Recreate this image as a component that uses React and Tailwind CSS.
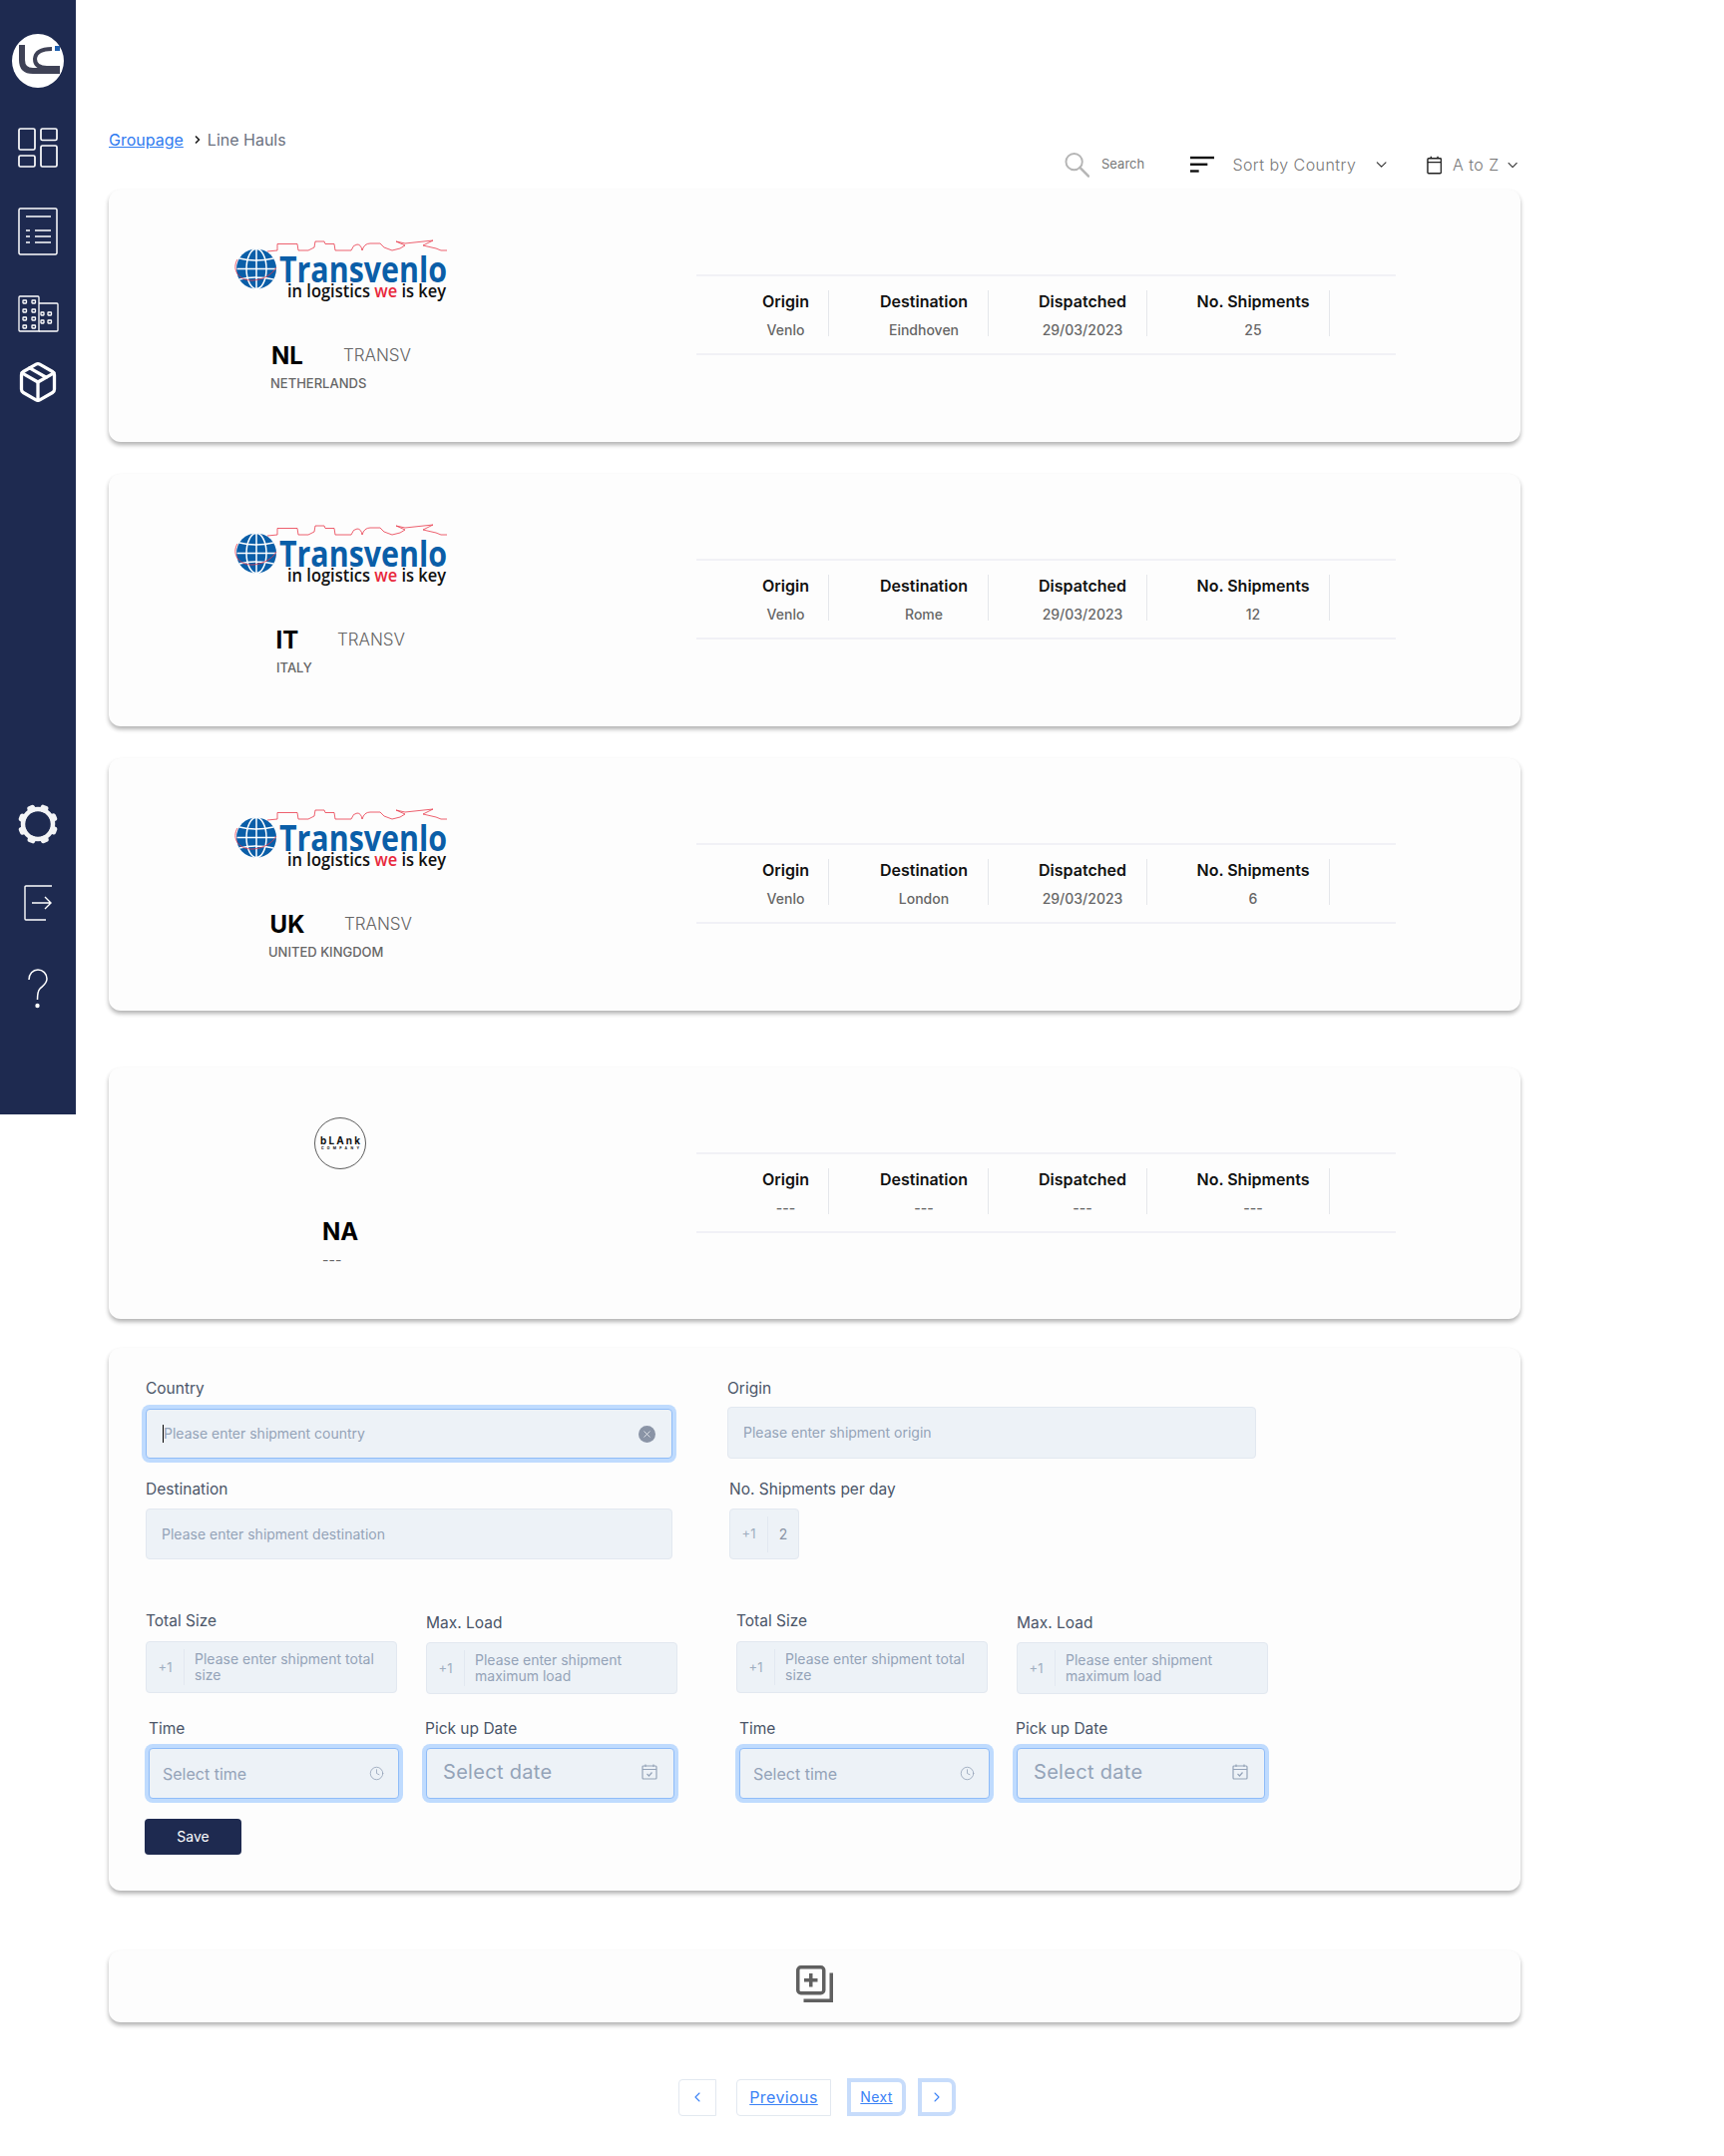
import { ChevronDown, ChevronLeft, ChevronRight, Clock, Package, X } from 'lucide-react'

const FONT = "font-['Inter','Liberation_Sans',sans-serif]"

const LINE_HAULS = [
  { code: 'NL', name: 'NETHERLANDS', nameClass: 'ml-[162px]', vendorClass: 'ml-0', destination: 'Eindhoven', shipments: '25' },
  { code: 'IT', name: 'ITALY', nameClass: 'ml-[168px]', vendorClass: '-ml-[6px]', destination: 'Rome', shipments: '12' },
  { code: 'UK', name: 'UNITED KINGDOM', nameClass: 'ml-[160px]', vendorClass: 'ml-px', destination: 'London', shipments: '6' },
]

const LcLogo = () => (
  <svg width="52" height="54" viewBox="0 0 52 54" className="ml-3 mt-[34px]">
    <ellipse cx="26" cy="27" rx="26" ry="27" fill="#fff" />
    <path d="M10 11V26Q10 37 21 37H48" fill="none" stroke="#3f4256" strokeWidth="6" />
    <path d="M40 15Q24 15 23 25Q23 34 35 34H48" fill="none" stroke="#3f4256" strokeWidth="4" />
    <rect x="43" y="12" width="5" height="5" fill="#1e5fb0" />
  </svg>
)

const DashboardIcon = () => (
  <svg width="40" height="40" viewBox="0 0 40 40" fill="none" stroke="#fff" strokeWidth="1.7">
    <rect x="1" y="1" width="16" height="21" rx="1.5" />
    <rect x="23" y="1" width="16" height="11.5" rx="1.5" />
    <rect x="1" y="28" width="16" height="11" rx="1.5" />
    <rect x="23" y="18" width="16" height="21" rx="1.5" />
  </svg>
)

const ListIcon = () => (
  <svg width="40" height="48" viewBox="0 0 40 48" fill="none" stroke="#fff" strokeWidth="1.5">
    <rect x="1" y="1" width="38" height="46" rx="1.5" />
    <path d="M8 9H33M17 23H33M17 29H33M17 35H33M8 23H12M8 29H12M8 35H12" />
  </svg>
)

const BuildingIcon = () => (
  <svg width="41" height="37" viewBox="0 0 41 37" fill="none" stroke="#fff" strokeWidth="1.3">
    <path d="M21 36H2a1 1 0 0 1-1-1V2a1 1 0 0 1 1-1h18a1 1 0 0 1 1 1V36Z" />
    <path d="M21 8H39a1 1 0 0 1 1 1V35a1 1 0 0 1-1 1H21" />
    {[5, 14, 22, 30].map((y) => (
      <g key={y}>
        <rect x="5" y={y} width="3.5" height="3" rx="0.5" />
        <rect x="14" y={y} width="3.5" height="3" rx="0.5" />
      </g>
    ))}
    {[17, 25].map((y) => (
      <g key={y}>
        <rect x="23" y={y} width="3" height="3" rx="0.5" />
        <rect x="30" y={y} width="3.5" height="3" rx="0.5" />
      </g>
    ))}
  </svg>
)

const GearIcon = () => (
  <svg width="40" height="40" viewBox="0 0 40 40" fill="#f3f4f6">
    <circle cx="20" cy="20" r="15" fill="none" stroke="#f3f4f6" strokeWidth="4.5" />
    {[22, 67, 112, 157, 202, 247, 292, 337].map((deg) => (
      <rect key={deg} x="16" y="0" width="8" height="7" rx="2.5" transform={`rotate(${deg} 20 20)`} />
    ))}
  </svg>
)

const LogoutIcon = () => (
  <svg width="28" height="36" viewBox="0 0 28 36" fill="none" stroke="#fff" strokeWidth="1.4">
    <path d="M28 1H2a1 1 0 0 0-1 1V34a1 1 0 0 0 1 1H22" />
    <path d="M8 18H27M21 12l6 6-6 6" />
  </svg>
)

const QuestionIcon = () => (
  <svg width="20" height="40" viewBox="0 0 20 40" fill="none" stroke="#fff" strokeWidth="1.5">
    <path d="M1 11C1 5 5 1 10 1C15 1 19 5 19 10C19 15 15 17 12 20C10 22 9.500 26 9.500 31" />
    <circle cx="9.500" cy="37" r="2.200" fill="#fff" stroke="none" />
  </svg>
)

const Sidebar = () => (
  <aside className="w-[76px] h-[1117px] shrink-0 bg-[#1e2a50] flex flex-col">
    <LcLogo />
    <div className="ml-[18px] mt-10"><DashboardIcon /></div>
    <div className="ml-[18px] mt-10"><ListIcon /></div>
    <div className="ml-[18px] mt-10"><BuildingIcon /></div>
    <div className="ml-4 mt-[28px] h-11 text-white"><Package size={44} strokeWidth={1.8} /></div>
    <div className="ml-[18px] mt-[401px]"><GearIcon /></div>
    <div className="ml-6 mt-[41px]"><LogoutIcon /></div>
    <div className="ml-7 mt-[48px]"><QuestionIcon /></div>
  </aside>
)

const TransvenloLogo = () => (
  <svg width="216" height="64" viewBox="0 0 216 64" className="ml-[125px] mt-[50px] shrink-0 block overflow-visible">
    <path
      d="M34 12L44 11V4.500H64L65 11H75L81 8L82 2H91L92 4.500H101L102 11H118Q120 5 124 5Q128 5 129 11Q131 4 137 4H147L151 8L159 11L167 9L172 6L163 2L172 4L200 1L190 6L203 9L208 11H214"
      fill="none"
      stroke="#e8394a"
      strokeWidth="0.8"
    />
    <circle cx="23" cy="29.500" r="20" fill="#0a5ea8" />
    <g fill="none" stroke="#fff" strokeWidth="1.500">
      <ellipse cx="23" cy="29.500" rx="10" ry="20" />
      <path d="M23 9.500V49.500M3.500 29.500H42.500M6 19Q23 23 40 19M6 40Q23 36 40 40" />
    </g>
    <path d="M4 20C-2 30 5 42 20 41C30 40 38 36 43 28" fill="none" stroke="#e8394a" strokeWidth="0.8" />
    <text
      x="46"
      y="43"
      fontFamily="'Open Sans', sans-serif"
      fontWeight="700"
      fontSize="36"
      fill="#0a5ea8"
      textLength="168"
      lengthAdjust="spacingAndGlyphs"
    >
      Transvenlo
    </text>
    <text
      x="54"
      y="58"
      fontFamily="'Open Sans', sans-serif"
      fontWeight="600"
      fontSize="18"
      fill="#111"
      textLength="159"
      lengthAdjust="spacingAndGlyphs"
    >
      in logistics <tspan fill="#e8283c">we</tspan> is key
    </text>
  </svg>
)

const BlankLogo = () => (
  <svg width="52" height="52" viewBox="0 0 52 52" className="ml-[206px] mt-[50px] shrink-0 block">
    <circle cx="26" cy="26" r="25.500" fill="none" stroke="#333" strokeWidth="0.8" />
    <text x="6" y="27" fontFamily="'Inter', sans-serif" fontWeight="700" fontSize="10" fill="#111" textLength="40" lengthAdjust="spacing">
      bLAnk
    </text>
    <text x="7" y="32" fontFamily="'Inter', sans-serif" fontWeight="700" fontSize="3.500" fill="#111" textLength="38" lengthAdjust="spacing">
      COMPANY
    </text>
  </svg>
)

const StatCell = ({ title, value, className }) => (
  <div className={`flex flex-col items-center border-r border-[#e5e7eb] pr-5 h-[46px] ${className}`}>
    <div className="mt-px text-base leading-5 font-semibold text-[#111] whitespace-nowrap">{title}</div>
    <div className="mt-[10px] text-sm leading-[18px] font-medium text-[#666] whitespace-nowrap">{value}</div>
  </div>
)

const StatsTable = ({ destination, dispatched, shipments, origin }) => (
  <div className="w-[701px] h-[81px] mt-[85px] border-y-2 border-[#f1f1f6] flex pt-[14px] pl-5">
    <StatCell title="Origin" value={origin} className="w-[113px] pl-[47px]" />
    <StatCell title="Destination" value={destination} className="w-[160px] pl-[51px]" />
    <StatCell title="Dispatched" value={dispatched} className="w-[159px] pl-[50px]" />
    <StatCell title="No. Shipments" value={shipments} className="w-[183px] pl-[50px]" />
  </div>
)

const CARD = 'rounded-xl bg-[#fdfdfd] shadow-[0_3px_4px_rgba(0,0,0,0.3)]'

const HaulCard = ({ code, name, nameClass, vendorClass, destination, shipments }) => (
  <div className={`${CARD} h-[253px] flex`}>
    <div className="w-[589px] shrink-0 flex flex-col">
      <TransvenloLogo />
      <div className="mt-[37px] ml-[149px] flex h-8 items-center">
        <div className="w-[60px] text-center text-2xl font-bold text-black">{code}</div>
        <div className={`w-[120px] text-center text-[17px] font-light text-[#666] ${vendorClass}`}>TRANSV</div>
      </div>
      <div className={`mt-px text-[13px] leading-5 font-medium text-[#666] ${nameClass}`}>{name}</div>
    </div>
    <StatsTable origin="Venlo" destination={destination} dispatched="29/03/2023" shipments={shipments} />
  </div>
)

const BlankCard = () => (
  <div className={`${CARD} h-[252px] mt-[57px] flex`}>
    <div className="w-[589px] shrink-0 flex flex-col">
      <BlankLogo />
      <div className="mt-[47px] ml-[214px] h-8 leading-8 text-2xl font-bold text-black">NA</div>
      <div className="mt-[2px] ml-[214px] text-sm leading-5 text-[#666]">---</div>
    </div>
    <StatsTable origin="---" destination="---" dispatched="---" shipments="---" />
  </div>
)

const Label = ({ children, className = '' }) => (
  <div className={`text-[15.500px] leading-5 text-[#4a5568] whitespace-nowrap ${className}`}>{children}</div>
)

const FIELD = 'bg-[#edf2f7] border border-[#e2e8f0] rounded text-sm text-[#94a3b8] flex items-center'
const FOCUSED = 'bg-[#edf2f7] border border-[#8fbcf8] rounded shadow-[0_0_0_4px_#bfdbfe] text-[#94a3b8] flex items-center'

const PrefixedField = ({ text, className = '' }) => (
  <div className={`${FIELD} h-[52px] ${className}`}>
    <div className="w-[38px] h-9 shrink-0 border-r border-[#e2e8f0] flex items-center justify-center text-[#a0aec0] text-[13px]">+1</div>
    <div className="pl-[10px] pr-3 leading-4 text-sm">{text}</div>
  </div>
)

const CalendarCheck = () => (
  <svg width="16" height="16" viewBox="0 0 16 16" fill="none" stroke="#94a3b8" strokeWidth="1.200">
    <rect x="1" y="2" width="14" height="13" rx="1" />
    <path d="M1 5.500H15M4 0.500V3M12 0.500V3M5.500 10l2 2 3-3.500" />
  </svg>
)

const ScheduleGroup = () => (
  <div className="w-[533px] grid grid-cols-[252px_252px] gap-x-[29px]">
    <Label>Total Size</Label>
    <Label className="mt-[2px]">Max. Load</Label>
    <PrefixedField text="Please enter shipment total size" className="mt-2" />
    <PrefixedField text="Please enter shipment maximum load" className="mt-[9px]" />
    <Label className="mt-[25px] ml-[3px]">Time</Label>
    <Label className="mt-[25px] -ml-px">Pick up Date</Label>
    <div className={`${FOCUSED} mt-[9px] ml-[3px] w-[251px] h-[51px] pl-[13px] pr-[14px] justify-between text-base`}>
      <span>Select time</span>
      <Clock size={15} strokeWidth={1.3} />
    </div>
    <div className={`${FOCUSED} mt-[9px] w-[249px] h-[51px] pl-4 pr-4 pb-1 justify-between text-xl tracking-[0.3px]`}>
      <span>Select date</span>
      <CalendarCheck />
    </div>
  </div>
)

const ShipmentForm = () => (
  <div className={`${CARD} h-[544px] mt-[29px] pl-[37px] pt-[31px]`}>
    <div className="flex">
      <div className="w-[528px]">
        <Label>Country</Label>
        <div className={`${FOCUSED} mt-[10px] h-[50px] pl-4 pr-4 justify-between text-sm`}>
          <span className="border-l border-black leading-[18px]">Please enter shipment country</span>
          <span className="w-[17px] h-[17px] rounded-full bg-[#8a94a6] text-white flex items-center justify-center">
            <X size={11} strokeWidth={1.5} />
          </span>
        </div>
        <Label className="mt-[21px]">Destination</Label>
        <div className={`${FIELD} mt-[9px] h-[51px] pl-[15px]`}>Please enter shipment destination</div>
      </div>
      <div className="w-[530px] ml-[55px]">
        <Label>Origin</Label>
        <div className={`${FIELD} mt-2 h-[52px] pl-[15px]`}>Please enter shipment origin</div>
        <Label className="mt-[21px] ml-[2px]">No. Shipments per day</Label>
        <div className={`${FIELD} mt-[9px] ml-[2px] w-[70px] h-[51px]`}>
          <div className="w-[38px] h-9 border-r border-[#e2e8f0] flex items-center justify-center text-[13px] text-[#a0aec0]">+1</div>
          <div className="flex-1 text-center text-[#8a94a6]">2</div>
        </div>
      </div>
    </div>
    <div className="flex gap-x-[59px] mt-[52px]">
      <ScheduleGroup />
      <ScheduleGroup />
    </div>
    <button className="mt-5 -ml-px w-[97px] h-9 rounded bg-[#1e2a50] text-white text-sm">Save</button>
  </div>
)

const AddCard = () => (
  <div className={`${CARD} h-[72px] mt-[60px] flex justify-center pt-[15px]`}>
    <svg width="37" height="37" viewBox="0 0 37 37" fill="none" stroke="#606060" strokeWidth="3.5">
      <rect x="1.750" y="1.750" width="26" height="26" rx="3" />
      <path d="M14.750 8V21.500M8 14.750H21.500M7.500 35.250H35.250V7.500" />
    </svg>
  </div>
)

const Pagination = () => (
  <div className="mt-[56px] ml-[571px] flex items-center text-[#3b82f6]">
    <a className="w-[38px] h-[37px] border border-[#e2e8f0] rounded-l flex items-center justify-center">
      <ChevronLeft size={16} strokeWidth={1.6} />
    </a>
    <a className="ml-5 w-[95px] h-[37px] border border-[#e2e8f0] rounded-l flex items-center justify-center text-base tracking-wide underline">
      Previous
    </a>
    <a className="ml-4 w-[59px] h-[38px] border-4 border-[#c7dcfb] rounded-r-lg flex items-center justify-center text-sm tracking-wide underline">
      Next
    </a>
    <a className="ml-3 w-[38px] h-[38px] border-4 border-[#c7dcfb] rounded-r-lg flex items-center justify-center">
      <ChevronRight size={16} strokeWidth={1.6} />
    </a>
  </div>
)

const Toolbar = () => (
  <div className="h-[26px] flex items-center text-[#777]">
    <svg width="26" height="26" viewBox="0 0 26 26" fill="none" stroke="#b5b5b5" className="ml-[958px]">
      <circle cx="10" cy="10" r="8.500" strokeWidth="2" />
      <path d="M16 16L25 25" strokeWidth="2.500" strokeLinecap="round" />
    </svg>
    <span className="ml-3 w-[46px] text-[13px] whitespace-nowrap">Search</span>
    <svg width="25" height="18" viewBox="0 0 25 18" className="ml-[45px]" fill="#111">
      <rect width="25" height="2.500" y="0.500" />
      <rect width="18" height="2.500" y="7.500" />
      <rect width="9" height="2.500" y="14.500" />
    </svg>
    <span className="ml-[18px] w-[126px] text-base font-light tracking-[0.45px] whitespace-nowrap">Sort by Country</span>
    <ChevronDown size={18} strokeWidth={1.6} className="ml-[17px] text-[#333]" />
    <svg width="16" height="19" viewBox="0 0 16 19" fill="none" stroke="#222" strokeWidth="1.500" className="ml-[36px]">
      <rect x="1" y="2.500" width="14" height="15.500" rx="1" />
      <path d="M1 6.500H15M4.500 0.500V2.500M11.500 0.500V2.500" />
    </svg>
    <span className="ml-[11px] w-[47px] text-base font-light tracking-[0.45px] whitespace-nowrap">A to Z</span>
    <ChevronDown size={17} strokeWidth={1.6} className="ml-[5px] text-[#333]" />
  </div>
)

export default function App() {
  return (
    <div className={`${FONT} flex min-h-[2161px] bg-white`}>
      <Sidebar />
      <main className="w-[1415px] ml-[33px]">
        <div className="mt-[128px] h-6 flex items-center text-base">
          <a className="text-[#2f7bf0] underline">Groupage</a>
          <ChevronRight size={12} strokeWidth={3.5} className="ml-2 text-[#222]" />
          <span className="ml-1 text-[#6b7280]">Line Hauls</span>
        </div>
        <Toolbar />
        <div className="mt-3 flex flex-col gap-y-8">
          {LINE_HAULS.map((haul) => (
            <HaulCard key={haul.code} {...haul} />
          ))}
        </div>
        <BlankCard />
        <ShipmentForm />
        <AddCard />
        <Pagination />
      </main>
    </div>
  )
}
